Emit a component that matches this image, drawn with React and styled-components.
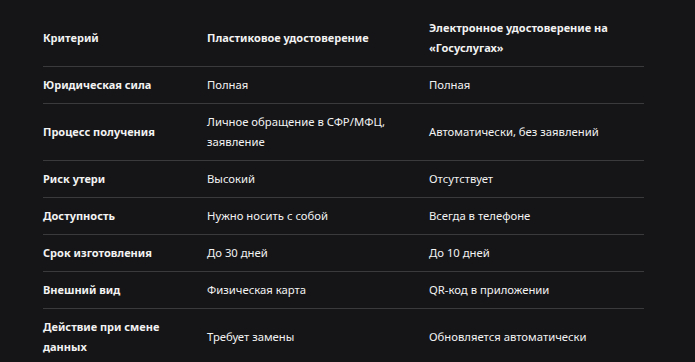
import React from "react";
import styled, { createGlobalStyle } from "styled-components";

const Global = createGlobalStyle`
  html, body { margin: 0; padding: 0; background: #151517; }
  body { font-family: "Noto Sans", "Open Sans", sans-serif; }
`;

const Page = styled.div`
  padding: 10px 51px 0 43px;
  background: #151517;
  min-height: 362px;
  box-sizing: border-box;
`;

const Table = styled.table`
  width: 601px;
  border-collapse: collapse;
  table-layout: fixed;
  color: #f2f2f2;
  font-size: 11.3px;
  line-height: 20px;
`;

const Th = styled.th`
  text-align: left;
  font-weight: 700;
  font-size: 11px;
  padding: 8px 16px 8px 0;
  vertical-align: middle;
  border-bottom: 1px solid #3a3a3d;
`;

const Td = styled.td`
  padding: 8px 16px 8px 0;
  vertical-align: middle;
  font-weight: ${(p) => (p.$head ? 700 : 400)};
  font-size: ${(p) => (p.$head ? "11px" : "11.3px")};
  border-bottom: 1px solid #3a3a3d;
`;

const rows = [
  ["Юридическая сила", "Полная", "Полная"],
  ["Процесс получения", "Личное обращение в СФР/МФЦ, заявление", "Автоматически, без заявлений"],
  ["Риск утери", "Высокий", "Отсутствует"],
  ["Доступность", "Нужно носить с собой", "Всегда в телефоне"],
  ["Срок изготовления", "До 30 дней", "До 10 дней"],
  ["Внешний вид", "Физическая карта", "QR-код в приложении"],
  ["Действие при смене данных", "Требует замены", "Обновляется автоматически"],
];

export default function App() {
  return (
    <>
      <Global />
      <Page>
        <Table>
          <colgroup>
            <col style={{ width: 164 }} />
            <col style={{ width: 222 }} />
            <col style={{ width: 215 }} />
          </colgroup>
          <thead>
            <tr>
              <Th>Критерий</Th>
              <Th>Пластиковое удостоверение</Th>
              <Th>Электронное удостоверение на «Госуслугах»</Th>
            </tr>
          </thead>
          <tbody>
            {rows.map((r) => (
              <tr key={r[0]}>
                <Td $head>{r[0]}</Td>
                <Td>{r[1]}</Td>
                <Td>{r[2]}</Td>
              </tr>
            ))}
          </tbody>
        </Table>
      </Page>
    </>
  );
}
